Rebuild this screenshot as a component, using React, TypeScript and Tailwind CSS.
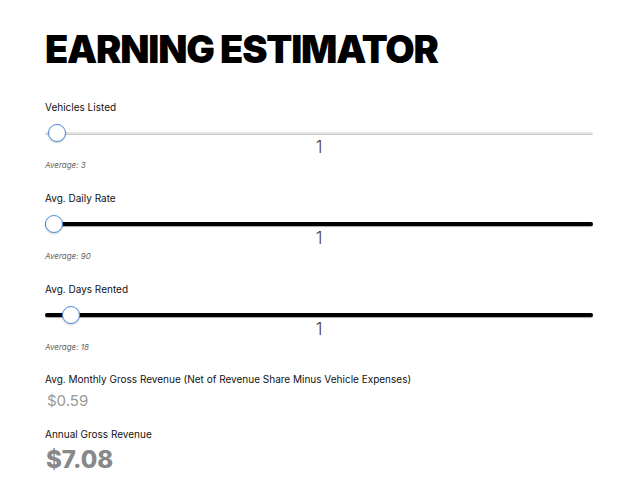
import React from "react";

interface SliderRowProps {
  label: string;
  average: string;
  thumbLeft: number;
  variant: "light" | "dark";
}

function SliderRow({ label, average, thumbLeft, variant }: SliderRowProps) {
  return (
    <div className="flex flex-col h-[91px]">
      <div className="text-[10px] leading-[12px] text-[#111] mt-[1px]">{label}</div>
      <div className="relative h-[18px] mt-[11px] mr-[45px] flex items-center">
        {variant === "light" ? (
          <div className="w-full h-[3px] bg-[#e4e4e4] border-b border-[#c8c8c8] rounded-sm" />
        ) : (
          <div className="w-full h-[4px] bg-black rounded-full shadow-[0_1px_1px_rgba(0,0,0,0.35)]" />
        )}
        <div
          className="absolute top-[0px] w-[18px] h-[18px] rounded-full bg-white border border-[#4a8be0] shadow-[0_1px_2px_rgba(0,0,0,0.2)]"
          style={{ left: thumbLeft }}
        />
      </div>
      <div className="text-center mr-[45px] text-[17px] leading-[18px] text-[#4a3a33] mt-[-4px] font-light">
        1
      </div>
      <div className="text-[8px] leading-[10px] italic text-[#666] mt-[4px]">{average}</div>
    </div>
  );
}

export default function App() {
  return (
    <div className="bg-white w-[638px] h-[500px] pl-[45px] font-['Inter',sans-serif] overflow-hidden">
      <h1 className="pt-[26px] text-[38px] leading-[46px] font-black tracking-[-1.2px] text-black">
        EARNING ESTIMATOR
      </h1>
      <div className="mt-[28px]">
        <SliderRow label="Vehicles Listed" average="Average: 3" thumbLeft={3} variant="light" />
        <SliderRow label="Avg. Daily Rate" average="Average: 90" thumbLeft={0} variant="dark" />
        <SliderRow label="Avg. Days Rented" average="Average: 18" thumbLeft={17} variant="dark" />
      </div>
      <div className="text-[10px] leading-[12px] text-[#111] mt-[0px]">
        Avg. Monthly Gross Revenue (Net of Revenue Share Minus Vehicle Expenses)
      </div>
      <div className="text-[15px] leading-[18px] text-[#999] mt-[7px] ml-[2px]">$0.59</div>
      <div className="text-[10px] leading-[12px] text-[#111] mt-[18px]">Annual Gross Revenue</div>
      <div className="text-[24px] leading-[28px] font-extrabold text-[#888] mt-[6px] ml-[1px]">$7.08</div>
    </div>
  );
}
